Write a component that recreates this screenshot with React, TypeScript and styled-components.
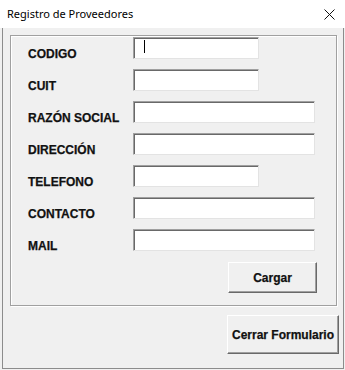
import { createGlobalStyle, styled } from 'styled-components';

const GlobalStyle = createGlobalStyle`
  html, body {
    margin: 0;
    padding: 0;
    background: #f0f0f0;
  }
  * {
    box-sizing: border-box;
  }
`;

type Field = {
  label: string;
  wide?: boolean;
  focused?: boolean;
};

const fields: Field[] = [
  { label: 'CODIGO', focused: true },
  { label: 'CUIT' },
  { label: 'RAZÓN SOCIAL', wide: true },
  { label: 'DIRECCIÓN', wide: true },
  { label: 'TELEFONO' },
  { label: 'CONTACTO', wide: true },
  { label: 'MAIL', wide: true },
];

export default function App() {
  return (
    <>
      <GlobalStyle />
      <Window>
        <TitleBar>
          <Title>Registro de Proveedores</Title>
          <CloseButton>
            <svg width="11" height="11" viewBox="0 0 11 11">
              <path d="M0.5 0.5 L10.5 10.5 M10.5 0.5 L0.5 10.5" stroke="#111" strokeWidth="1" fill="none" />
            </svg>
          </CloseButton>
        </TitleBar>
        <Client>
          <Frame>
            <FieldGrid>
              {fields.map((f) => (
                <Row key={f.label}>
                  <Label>{f.label}</Label>
                  <TextBox wide={f.wide}>{f.focused && <Caret />}</TextBox>
                </Row>
              ))}
            </FieldGrid>
            <FrameFooter>
              <Button w={89} h={31}>Cargar</Button>
            </FrameFooter>
          </Frame>
          <Footer>
            <Button w={112} h={39}>Cerrar Formulario</Button>
          </Footer>
        </Client>
      </Window>
    </>
  );
}

const Window = styled.div`
  width: 345px;
  height: 370px;
  display: flex;
  flex-direction: column;
`;

const TitleBar = styled.div`
  height: 28px;
  background: #ffffff;
  display: flex;
  align-items: center;
  justify-content: space-between;
  padding: 0 8px 0 7px;
`;

const Title = styled.span`
  font-family: 'Noto Sans', 'Liberation Sans', sans-serif;
  font-size: 11px;
  color: #000;
  line-height: 16px;
`;

const CloseButton = styled.div`
  width: 11px;
  height: 11px;
  display: flex;
  margin-top: 1px;
  margin-right: 2px;
`;

const Client = styled.div`
  margin-left: 2px;
  width: 342px;
  height: 341px;
  background: #f0f0f0;
  border-left: 1px solid #8c8c8c;
  border-right: 1px solid #8c8c8c;
  border-bottom: 1px solid #8c8c8c;
  display: flex;
  flex-direction: column;
  padding: 7px 0 0 7px;
`;

const Frame = styled.div`
  width: 327px;
  height: 271px;
  border: 1px solid #a0a0a0;
  box-shadow: inset 1px 1px #ffffff, 1px 1px #ffffff;
  display: flex;
  flex-direction: column;
  padding: 1px 0 0 17px;
`;

const FieldGrid = styled.div`
  display: flex;
  flex-direction: column;
  gap: 10px;
`;

const Row = styled.div`
  display: grid;
  grid-template-columns: 105px auto;
  align-items: end;
  height: 22px;
`;

const Label = styled.span`
  font-family: 'Liberation Sans', Arial, sans-serif;
  font-weight: bold;
  font-size: 12px;
  line-height: 13px;
  margin-bottom: -2px;
  color: #111;
  -webkit-text-stroke: 0.25px #111;
`;

const TextBox = styled.div<{ wide?: boolean }>`
  width: ${({ wide }) => (wide ? '182px' : '126px')};
  height: 22px;
  background: #ffffff;
  border-top: 1px solid #a0a0a0;
  border-left: 1px solid #a0a0a0;
  border-right: 1px solid #e3e3e3;
  border-bottom: 1px solid #e3e3e3;
  box-shadow: inset 1px 1px #696969;
  display: flex;
  align-items: center;
  padding-left: 10px;
`;

const Caret = styled.span`
  width: 1px;
  height: 13px;
  background: #000;
  margin-top: -4px;
`;

const FrameFooter = styled.div`
  display: flex;
  justify-content: flex-end;
  padding: 11px 19px 0 0;
`;

const Button = styled.button<{ w: number; h: number }>`
  width: ${({ w }) => w}px;
  height: ${({ h }) => h}px;
  background: #f0f0f0;
  border-top: 1px solid #ffffff;
  border-left: 1px solid #ffffff;
  border-right: 1px solid #696969;
  border-bottom: 1px solid #696969;
  box-shadow: inset -1px -1px #a0a0a0;
  font-family: 'Liberation Sans', Arial, sans-serif;
  font-weight: bold;
  font-size: 12px;
  color: #111;
  -webkit-text-stroke: 0.25px #111;
  padding: 0;
`;

const Footer = styled.div`
  display: flex;
  justify-content: flex-end;
  padding: 9px 4px 0 0;
`;
